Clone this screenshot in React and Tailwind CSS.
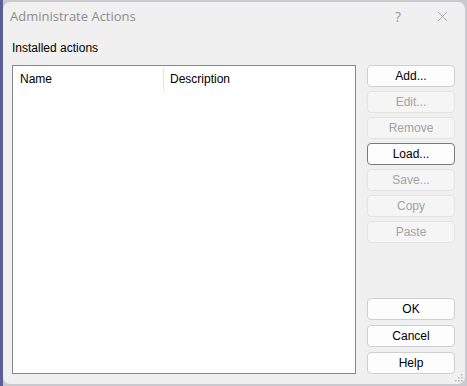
import React from 'react';
import { X } from 'lucide-react';

const topButtons = [
  { label: 'Add...', enabled: true },
  { label: 'Edit...', enabled: false },
  { label: 'Remove', enabled: false },
  { label: 'Load...', enabled: true, focused: true },
  { label: 'Save...', enabled: false },
  { label: 'Copy', enabled: false },
  { label: 'Paste', enabled: false },
];

const bottomButtons = ['OK', 'Cancel', 'Help'];

const DialogButton = ({ label, enabled = true, focused = false }) => {
  const cls = !enabled
    ? 'border-[#e3e3e3] bg-[#f5f5f5] text-[#a3a3a3]'
    : focused
      ? 'border-[#7a7a7a] bg-[#fdfdfd] text-black'
      : 'border-[#cfcfcf] bg-[#fdfdfd] text-black';

  return (
    <button
      type="button"
      className={`h-[22px] w-[88px] shrink-0 rounded-[4px] border text-[12px] leading-none ${cls}`}
    >
      {label}
    </button>
  );
};

const App = () => {
  return (
    <div
      className="w-[467px] h-[386px] bg-[#c9c9cf] border-l-[3px] border-[#5b5f95] pt-[2px] overflow-hidden"
      style={{ fontFamily: '"Liberation Sans", Arial, sans-serif' }}
    >
      <div className="relative w-[462px] h-[382px] rounded-[7px] bg-[#f0f0f0] flex flex-col">
        {/* Title bar */}
        <div className="h-[29px] shrink-0 flex items-center pl-[7px] pr-[14px]">
          <span
            className="text-[13px] text-[#8e8e8e] flex-1"
            style={{ fontFamily: '"Open Sans", "Noto Sans", sans-serif' }}
          >
            Administrate Actions
          </span>
          <span
            className="text-[14px] text-[#9a9a9a] mr-[33px]"
            style={{ fontFamily: '"Open Sans", "Noto Sans", sans-serif' }}
          >
            ?
          </span>
          <X size={17} strokeWidth={1} className="text-[#8f8f8f]" />
        </div>

        <div className="flex-1 flex flex-col pl-[9px] pr-[10px] pb-[10px]">
          <div className="mt-[10px] h-[14px] text-[12px] leading-[14px] text-black">
            Installed actions
          </div>

          <div className="mt-[10px] flex-1 flex gap-[11px]">
            {/* List view */}
            <div className="flex-1 bg-white border border-[#828790]">
              <div className="h-[26px] flex items-center text-[12px] text-black">
                <div className="w-[151px] h-[24px] flex items-center pl-[7px] border-r border-[#e5e5e5]">
                  Name
                </div>
                <div className="pl-[6px]">Description</div>
              </div>
            </div>

            {/* Buttons */}
            <div className="w-[88px] flex flex-col justify-between">
              <div className="flex flex-col gap-[4px]">
                {topButtons.map((b) => (
                  <DialogButton key={b.label} {...b} />
                ))}
              </div>
              <div className="flex flex-col gap-[5px]">
                {bottomButtons.map((label) => (
                  <DialogButton key={label} label={label} />
                ))}
              </div>
            </div>
          </div>
        </div>

        {/* Resize grip */}
        <svg className="absolute right-[2px] bottom-[2px]" width="10" height="10" viewBox="0 0 10 10">
          {[[8, 2], [8, 5], [5, 5], [8, 8], [5, 8], [2, 8]].map(([x, y]) => (
            <rect key={`${x}-${y}`} x={x} y={y} width="1.5" height="1.5" fill="#b5b5b5" />
          ))}
        </svg>
      </div>
    </div>
  );
};

export default App;
